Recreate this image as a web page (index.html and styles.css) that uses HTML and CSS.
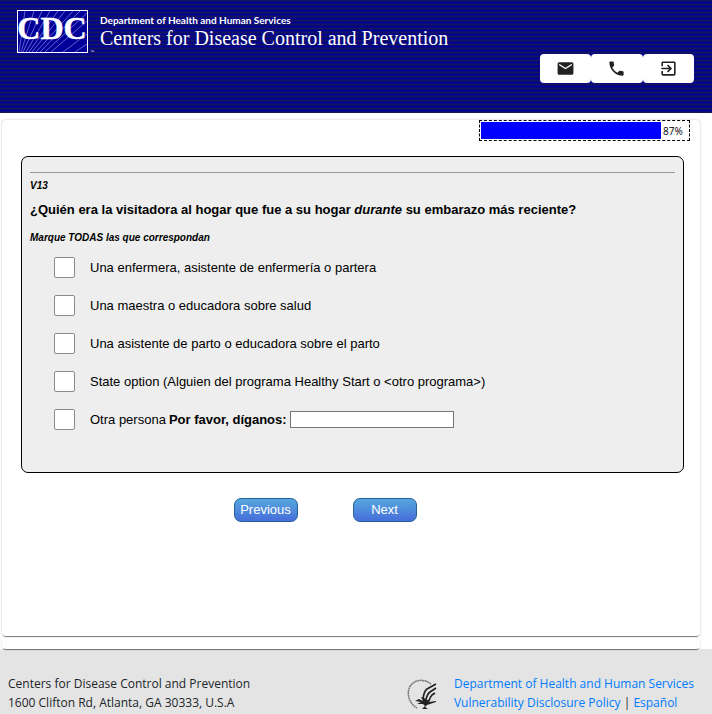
FILE: index.html
```html
<!DOCTYPE html>
<html lang="es">
<head>
<meta charset="utf-8">
<title>Centers for Disease Control and Prevention</title>
<link rel="stylesheet" href="styles.css">
</head>
<body>
<header class="banner">
  <div class="brand">
    <svg class="logo" viewBox="0 0 78 44" width="78" height="44" role="img" aria-label="CDC">
      <rect x="0.5" y="0.5" width="70" height="42" fill="#000099" stroke="#ffffff"/>
      <path d="M2 42L8 1M4 42L17 1M6 42L25 1M9 42L33 1M12 42L41 1M15 42L48 1M19 42L56 1M23 42L63 1M28 42L70 3M34 42L70 11M46 42L70 24M58 42L70 34" fill="none" stroke="#8d8de0" stroke-width="0.7"/>
      <text class="logo-text" x="35" y="29" text-anchor="middle">CDC</text>
      <text class="logo-mark" x="73" y="43">™</text>
    </svg>
    <div class="brand-text">
      <p class="department">Department of Health and Human Services</p>
      <p class="agency">Centers for Disease Control and Prevention</p>
    </div>
  </div>
  <nav class="tools">
    <button class="tool" type="button" aria-label="Email">
      <svg viewBox="0 0 24 24" width="19" height="19"><path d="M20 4H4c-1.100 0-2 .9-2 2v12c0 1.100.9 2 2 2h16c1.100 0 2-.9 2-2V6c0-1.100-.9-2-2-2zm0 4l-8 5-8-5V6l8 5 8-5v2z"/></svg>
    </button>
    <button class="tool" type="button" aria-label="Phone">
      <svg viewBox="0 0 24 24" width="19" height="19"><path d="M6.620 10.790c1.440 2.830 3.760 5.140 6.590 6.590l2.200-2.200c.270-.270.670-.360 1.020-.240 1.120.370 2.330.570 3.570.570.550 0 1 .450 1 1V20c0 .550-.450 1-1 1-9.390 0-17-7.610-17-17 0-.550.450-1 1-1h3.500c.550 0 1 .450 1 1 0 1.250.200 2.450.570 3.570.110.350.030.740-.250 1.020l-2.200 2.200z"/></svg>
    </button>
    <button class="tool" type="button" aria-label="Exit">
      <svg viewBox="0 0 24 24" width="19" height="19"><path d="M10.090 15.590L11.500 17l5-5-5-5-1.410 1.410L12.670 11H3v2h9.670l-2.580 2.590zM19 3H5c-1.110 0-2 .9-2 2v4h2V5h14v14H5v-4H3v4c0 1.100.890 2 2 2h14c1.100 0 2-.9 2-2V5c0-1.100-.9-2-2-2z"/></svg>
    </button>
  </nav>
</header>
<div class="sheet">
  <main class="page">
    <div class="progress" role="progressbar" aria-valuenow="87" aria-valuemin="0" aria-valuemax="100" aria-label="87%">
      <div class="bar"></div><span>87%</span>
    </div>
    <form>
      <section class="question">
        <hr>
        <p class="note">V13</p>
        <h1>¿Quién era la visitadora al hogar que fue a su hogar <em>durante</em> su embarazo más reciente?</h1>
        <p class="note">Marque TODAS las que correspondan</p>
        <div class="options">
          <div class="option"><input type="checkbox" id="o1"><label for="o1">Una enfermera, asistente de enfermería o partera</label></div>
          <div class="option"><input type="checkbox" id="o2"><label for="o2">Una maestra o educadora sobre salud</label></div>
          <div class="option"><input type="checkbox" id="o3"><label for="o3">Una asistente de parto o educadora sobre el parto</label></div>
          <div class="option"><input type="checkbox" id="o4"><label for="o4">State option (Alguien del programa Healthy Start o &lt;otro programa&gt;)</label></div>
          <div class="option"><input type="checkbox" id="o5"><label for="o5">Otra persona</label><label class="other" for="other">Por favor, díganos:</label><input type="text" id="other"></div>
        </div>
      </section>
      <div class="actions">
        <button class="step" type="button">Previous</button>
        <button class="step" type="button">Next</button>
      </div>
    </form>
  </main>
</div>
<footer class="footer">
  <address>Centers for Disease Control and Prevention<br>1600 Clifton Rd, Atlanta, GA 30333, U.S.A</address>
  <div class="department-links">
    <svg viewBox="0 0 32 32" width="32" height="32" role="img" aria-label="Department of Health and Human Services">
      <path d="M24 5C18 0 9 0 4 6C-1 12 1 24 10 29" fill="none" stroke="#777" stroke-width="1.500" stroke-dasharray="2 .5"/>
      <path d="M29 5L20 10Q17 12 16 20M29 9L23 13Q20 15 19 21M28 14L25 16Q23 18 22 22" fill="none" stroke="#222" stroke-width="1.700"/>
      <path d="M8 22L12 20L16 22L14 18L17 19L20 21L23 21L22 23L29 22L29 23L23 25L20 26L18 28L21 30L15 30L18 27L16 25L10 25L14 23z" fill="#222"/>
    </svg>
    <p><a href="#">Department of Health and Human Services</a><br><a href="#">Vulnerability Disclosure Policy</a> | <a href="#">Español</a></p>
  </div>
</footer>
</body>
</html>
```
FILE: styles.css
```css
* { box-sizing: border-box; }

body {
  margin: 0;
  background: #fff;
  color: #000;
  font-family: "Liberation Sans", Arial, sans-serif;
  font-size: 13px;
}

p, h1 { margin: 0; }

.banner {
  min-height: 113px;
  padding: 10px 18px 0 17px;
  background: repeating-linear-gradient(#15155c 0 1px, #0a0a78 1px 2px, #000099 2px 3px, #0a0a78 3px 4px);
  display: flex;
  flex-direction: column;
}

.brand { display: flex; gap: 5px; color: #fff; }
.logo { flex: none; }
.logo-text {
  font: bold 32px "Liberation Serif", serif;
  fill: #fff;
  stroke: #fff;
  stroke-width: 0.5px;
}
.logo-mark { font: 4px "Liberation Sans", sans-serif; fill: #fff; }
.brand-text { padding-top: 4px; white-space: nowrap; }
.department { font: bold 10px/12px Lato, sans-serif; }
.agency { font: 20px/24px "Liberation Serif", serif; }

.tools { display: flex; align-self: flex-end; width: 154px; }
.tool {
  display: flex;
  flex: 1;
  align-items: center;
  justify-content: center;
  height: 29px;
  padding: 0;
  border: 0;
  border-radius: 4px;
  background: #fff;
  fill: #212121;
}

.sheet {
  position: relative;
  margin: 7px 12px 0 2px;
  padding-bottom: 13px;
  border-radius: 4px;
}
.page {
  min-height: 516px;
  padding: 0 16px 0 19px;
  border-radius: 4px;
}
.sheet, .page {
  box-shadow: 0 2px 1px -1px rgba(0, 0, 0, 0.5), 0 0 2px rgba(0, 0, 0, 0.15);
}

.progress {
  display: flex;
  align-items: center;
  gap: 2px;
  width: 211px;
  height: 21px;
  margin: 0 -6px 0 auto;
  padding: 1px;
  border: 1px dashed #000;
  font: 10px "Open Sans", sans-serif;
}
.bar { width: 180px; height: 17px; background: #00f; }

.question {
  min-height: 317px;
  margin-top: 15px;
  padding: 15px 8px 32px;
  border: 1px solid #000;
  border-radius: 7px;
  background: #eee;
}
hr { margin: 0; border: 0; border-top: 1px solid #999; }
.note { font: italic bold 10px/14px "Liberation Sans", Arial, sans-serif; }
.question hr + .note { margin-top: 6px; }
h1 { margin: 8px 0 12px; font-size: 13px; line-height: 18px; }

.options { padding: 3px 0 0 24px; }
.option { display: flex; align-items: center; height: 38px; }
.option input[type="checkbox"] {
  appearance: none;
  flex: none;
  width: 21px;
  height: 21px;
  margin: 0 15px 0 0;
  border: 1px solid #8b8b8b;
  border-radius: 2px;
  background: #fff;
}
.other { margin: 0 3px; font-weight: bold; }
.option input[type="text"] {
  width: 164px;
  height: 17px;
  padding: 1px 2px;
  border: 1px solid #767676;
}

.actions {
  display: flex;
  justify-content: center;
  gap: 55px;
  padding: 25px 55px 0 0;
}
.step {
  width: 64px;
  height: 24px;
  padding: 0 0 2px;
  border: 1px solid #245f99;
  border-radius: 7px;
  background: linear-gradient(#55a8dd, #476ddb);
  color: #fff;
  font: 13px "Liberation Sans", Arial, sans-serif;
}

.footer {
  display: flex;
  justify-content: space-between;
  min-height: 65px;
  padding: 25px 18px 0 8px;
  background: #e4e4e4;
  color: #212529;
  font: 12px/19px "Open Sans", sans-serif;
  white-space: nowrap;
}
address { font-style: normal; }
.department-links { display: flex; gap: 15px; }
.department-links svg { margin-top: 5px; }
a { color: #007bff; text-decoration: none; }
```
